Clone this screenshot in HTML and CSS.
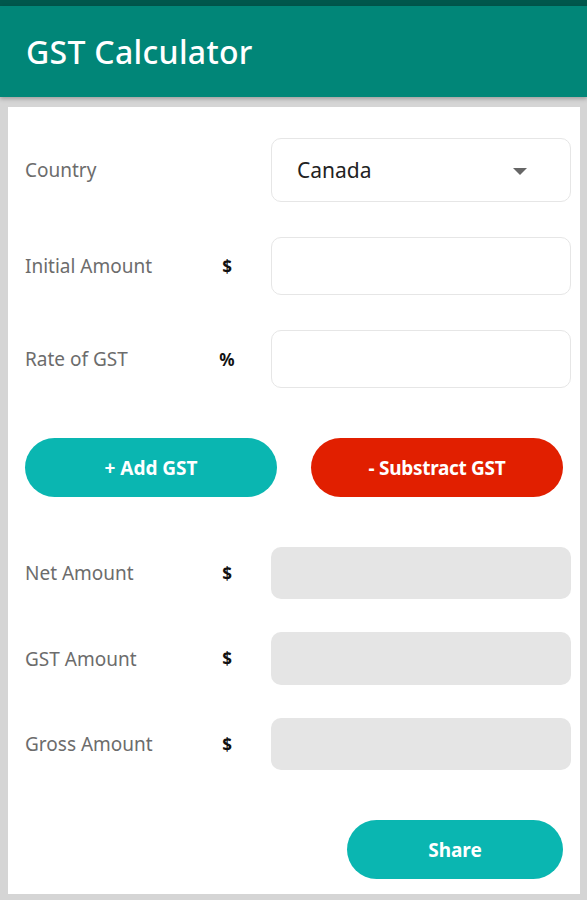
FILE: index.html
```html
<!DOCTYPE html>
<html>
<head>
<meta charset="utf-8">
<link rel="stylesheet" href="styles.css">
</head>
<body>
<div class="status"></div>
<header class="appbar"><h1 class="title">GST Calculator</h1></header>
<main class="card">
  <div class="row row-country">
    <span class="label">Country</span>
    <span class="sym"></span>
    <div class="field select">
      <span class="value">Canada</span>
      <span class="caret"></span>
    </div>
  </div>
  <div class="row row-input gap35">
    <span class="label">Initial Amount</span>
    <span class="sym">$</span>
    <div class="field input"></div>
  </div>
  <div class="row row-input gap35">
    <span class="label">Rate of GST</span>
    <span class="sym">%</span>
    <div class="field input"></div>
  </div>
  <div class="buttons">
    <button class="btn btn-add">+ Add GST</button>
    <button class="btn btn-sub">- Substract GST</button>
  </div>
  <div class="row row-out gap50">
    <span class="label">Net Amount</span>
    <span class="sym">$</span>
    <div class="field output"></div>
  </div>
  <div class="row row-out gap33 tall">
    <span class="label">GST Amount</span>
    <span class="sym">$</span>
    <div class="field output"></div>
  </div>
  <div class="row row-out gap33">
    <span class="label">Gross Amount</span>
    <span class="sym">$</span>
    <div class="field output"></div>
  </div>
  <div class="share-row">
    <button class="btn btn-share">Share</button>
  </div>
</main>
</body>
</html>
```
FILE: styles.css
```css
* { box-sizing: border-box; }
html, body { margin: 0; padding: 0; }
body {
  width: 587px;
  height: 900px;
  overflow: hidden;
  background: #d5d5d5;
  font-family: "Noto Sans", "Open Sans", sans-serif;
}
.status { height: 6px; background: #00574c; }
.appbar {
  height: 91px;
  background: #018678;
  display: flex;
  align-items: center;
  padding-left: 26px;
  box-shadow: 0 2px 4px rgba(0,0,0,0.25);
  position: relative;
}
.title {
  margin: 0;
  color: #ffffff;
  font-size: 32px;
  font-weight: 500;
  letter-spacing: 0.3px;
}
.card {
  margin: 10px 7px 0 8px;
  height: 787px;
  background: #ffffff;
  padding: 31px 9px 15px 17px;
  display: flex;
  flex-direction: column;
}
.row { display: flex; align-items: center; }
.label {
  width: 180px;
  font-size: 19px;
  color: #6c6c6c;
}
.sym {
  width: 44px;
  text-align: center;
  font-size: 17px;
  font-weight: 700;
  color: #111;
  margin-right: 22px;
}
.field { width: 300px; border-radius: 10px; }
.select {
  height: 64px;
  border: 1px solid #e6e6e6;
  display: flex;
  align-items: center;
  justify-content: space-between;
  padding: 0 43px 0 25px;
}
.value { font-size: 21px; color: #222; }
.caret {
  width: 0; height: 0;
  border-left: 7px solid transparent;
  border-right: 7px solid transparent;
  border-top: 7px solid #666;
  margin-top: 2px;
}
.input { height: 58px; border: 1px solid #e6e6e6; }
.output { height: 52px; background: #e5e5e5; }
.tall .output { height: 53px; }
.gap35 { margin-top: 35px; }
.gap33 { margin-top: 33px; }
.gap50 { margin-top: 50px; }
.buttons {
  margin-top: 50px;
  display: flex;
  gap: 34px;
  padding-right: 8px;
}
.btn {
  border: none;
  height: 59px;
  border-radius: 30px;
  color: #fff;
  font-family: "Noto Sans", "Open Sans", sans-serif;
  font-size: 19px;
  font-weight: 700;
  padding: 0;
}
.btn-add { width: 252px; background: #0ab6b1; }
.btn-sub { width: 252px; background: #e11f00; letter-spacing: -0.3px; }
.share-row {
  margin-top: 50px;
  display: flex;
  justify-content: flex-end;
  padding-right: 8px;
}
.btn-share { width: 216px; background: #0ab6b1; }
```
